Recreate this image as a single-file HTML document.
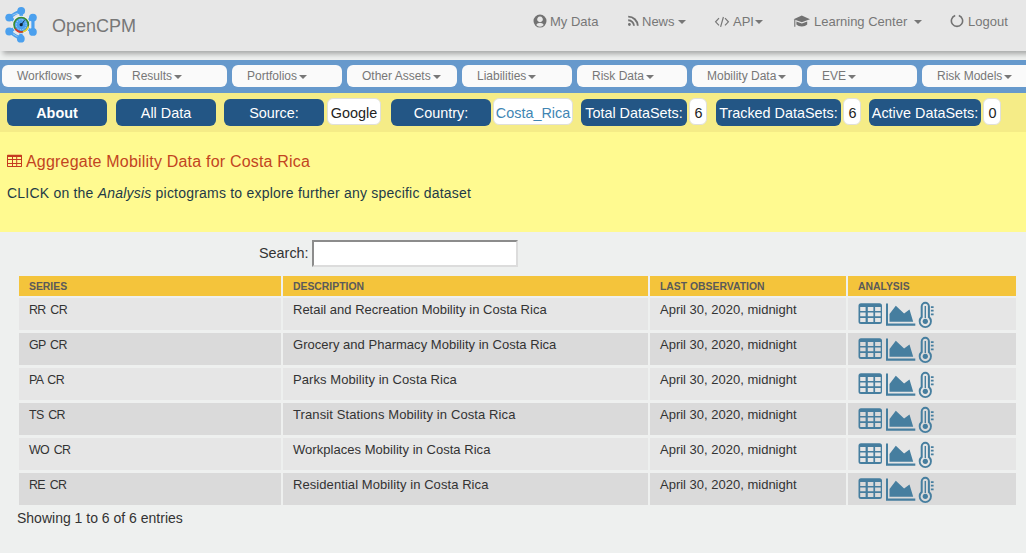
<!DOCTYPE html>
<html><head><meta charset="utf-8">
<style>
*{box-sizing:border-box;margin:0;padding:0}
html,body{width:1026px;height:558px;overflow:hidden;background:#fff;font-family:"Liberation Sans",sans-serif}
.abs{position:absolute}
#hdr{position:absolute;left:0;top:0;width:1060px;height:51px;background:#e7e7e7;box-shadow:3px 3px 5px rgba(0,0,0,.3)}
#brand{position:absolute;left:52px;top:16px;font-size:18px;color:#777}
.rn{position:absolute;top:14px;font-size:13px;color:#777;white-space:nowrap}
.caret{display:inline-block;width:0;height:0;border-left:4px solid transparent;border-right:4px solid transparent;border-top:4px solid #777;vertical-align:middle;margin-left:3px}
#nav{position:absolute;left:0;top:60px;width:1026px;height:33px;background:#6699cc}
.nb{position:absolute;top:5px;height:22px;width:110px;background:#fafafa;border-radius:6px;font-size:12px;color:#777;padding:4px 0 0 15px;white-space:nowrap}
.rn .caret{position:relative;top:-1px}
.nb .caret{border-top-color:#777;margin-left:2px}
#ybar{position:absolute;left:0;top:93px;width:1026px;height:39px;background:#f5ec87}
.db{position:absolute;top:6px;height:27px;padding-top:1px;background:#235685;border-radius:6px;color:#fff;font-size:14.4px;text-align:center;line-height:27px}
.wb{position:absolute;top:5px;height:27px;background:#fff;border:1px solid #e0e0da;border-radius:6px;color:#222;font-size:14.4px;text-align:center;line-height:26px;padding-top:1px}
#content{position:absolute;left:0;top:132px;width:1026px;height:100px;background:#fffa90}
#title{position:absolute;left:26px;top:21px;font-size:16px;letter-spacing:0.2px;color:#c2441f}
#sub{position:absolute;left:7px;top:53px;font-size:14px;letter-spacing:0.21px;color:#1e3a47}
#search{position:absolute;left:259px;top:245px;font-size:14.4px;color:#333}
#sbox{position:absolute;left:312px;top:240px;width:206px;height:27px;background:#fff;border:2px solid #8c8c8c;border-right-color:#dcdcdc;border-bottom-color:#dcdcdc}
table{position:absolute;left:18px;top:277px;border-collapse:separate;border-spacing:2px;margin:-2px}

.th{position:absolute;top:276px;height:20px;background:#f4c43b;color:#5a5a5a;font-size:10.4px;font-weight:bold;padding:5px 0 0 10px;white-space:nowrap}
.td{position:absolute;height:32px;color:#333;font-size:13px;padding:4px 0 0 10px;white-space:nowrap}
.ser{font-size:12.4px;letter-spacing:-0.6px;word-spacing:1.8px}
.odd{background:#e6e6e6}.even{background:#dadada}
.ic{position:absolute;left:0;top:0}
#tbg{position:absolute;left:19px;top:276px;width:997px;height:229px;background:#eef0ef}
#info{position:absolute;left:17px;top:510px;font-size:14px;color:#333}
</style></head><body>
<div style="position:absolute;left:0;top:0;width:1026px;height:553px;background:#eef0ef"></div>
<div id="hdr">
  <svg class="abs" style="left:0;top:0" width="45" height="48" viewBox="0 0 45 48">
    <g stroke="#4ba0ee" stroke-width="3.3" fill="none" stroke-linecap="round">
      <path d="M21.2 10.8L21.2 24.7M9.2 17.6L21.2 24.7M32.9 17.6L21.2 24.7M9.2 31.5L21.2 24.7M32.9 31.9L21.2 24.7M20.8 38.7L21.2 24.7M32.9 17.6L32.9 31.9M21.2 10.8Q15 13 9.2 17.6M9.2 31.5Q15 36 20.8 38.7"/>
    </g>
    <g stroke="#eaf2fa" stroke-width="0.7" fill="none" opacity="0.7">
      <path d="M12 15.5Q16 13.5 19 12.8M30.8 20.5L30.8 29M12.5 33.5Q16 36 18.5 37M5.8 16L7 14.6M5.8 30L7 28.6M18 8.6L19.2 7.4M30 16L31.2 14.6"/>
    </g>
    <g fill="#4ba0ee">
      <circle cx="21.2" cy="10.8" r="3.9"/><circle cx="9.2" cy="17.6" r="3.9"/><circle cx="32.9" cy="17.6" r="3.9"/>
      <circle cx="9.2" cy="31.5" r="3.9"/><circle cx="32.9" cy="31.9" r="3.9"/><circle cx="20.8" cy="38.7" r="3.9"/>
    </g>
    <circle cx="21.2" cy="24.7" r="9" fill="#eef3f8"/>
    <circle cx="21.2" cy="24.7" r="7.2" fill="#4ba0ee" stroke="#3b8a2e" stroke-width="1.6"/>
    <path d="M15.2 28.7A7.2 7.2 0 0 0 23 31.7" fill="none" stroke="#d9352a" stroke-width="1.6"/>
    <path d="M23 31.7A7.2 7.2 0 0 0 28.2 26.5" fill="none" stroke="#e8d23a" stroke-width="1.6"/>
    <circle cx="21.2" cy="24.7" r="5" fill="none" stroke="#d8e8f6" stroke-width="0.7" stroke-dasharray="1.3 1.3"/>
    <path d="M21.2 24.7L24.6 20.4" stroke="#0c2338" stroke-width="0.9"/>
    <circle cx="21.2" cy="24.7" r="1.6" fill="#0c2338"/>
  </svg>
  <div id="brand">OpenCPM</div>
  <svg class="abs" style="left:533px;top:14px" width="14" height="14" viewBox="0 0 14 14"><path fill="#727272" fill-rule="evenodd" d="M7 0.6a6.5 6.5 0 1 1 0 13a6.5 6.5 0 1 1 0-13z M7 2.6a2.8 2.8 0 1 0 0.01 0z M3.3 11a5 5 0 0 0 7.4 0c-0.5-1.2-1.5-1.9-2.7-2h-2c-1.2 0.1-2.2 0.8-2.7 2z"/></svg>
  <div class="rn" style="left:550px">My Data</div>
  <svg class="abs" style="left:627px;top:15px" width="12" height="12" viewBox="0 0 12 12"><g fill="none" stroke="#727272" stroke-width="1.9"><path d="M1.2 5.2a5.8 5.8 0 0 1 5.8 5.6"/><path d="M1.2 1.6a9.6 9.6 0 0 1 9.6 9.2"/></g><circle cx="2.4" cy="9.5" r="1.4" fill="#727272"/></svg>
  <div class="rn" style="left:642px">News<span class="caret"></span></div>
  <svg class="abs" style="left:714px;top:16px" width="16" height="12" viewBox="0 0 16 12"><g fill="none" stroke="#777" stroke-width="1.2"><path d="M5 2.2L1.6 5.8L5 9.4"/><path d="M11 2.2L14.4 5.8L11 9.4"/><path d="M9.4 1L6.6 10.8"/></g></svg>
  <div class="rn" style="left:733px">API<span class="caret" style="margin-left:1px"></span></div>
  <svg class="abs" style="left:793px;top:15px" width="18" height="13" viewBox="0 0 18 13"><path fill="#727272" d="M8.8 0.6L17 4.2L8.8 7.2L0.6 4.2z"/><path fill="#727272" d="M3.4 6.4v3.2c1.2 1.4 3.3 1.8 5.4 1.8s4.2-0.4 5.4-1.8v-3.2l-5.4 2z"/><path fill="none" stroke="#727272" stroke-width="1.1" d="M1.8 4.6v7.2"/></svg>
  <div class="rn" style="left:814px">Learning Center <span class="caret"></span></div>
  <svg class="abs" style="left:950px;top:14px" width="14" height="14" viewBox="0 0 14 14"><path fill="none" stroke="#727272" stroke-width="1.6" d="M5.2 1.5a5.6 5.6 0 1 0 3.6 0"/></svg>
  <div class="rn" style="left:968px">Logout</div>
</div>
<div id="nav">
  <div class="nb" style="left:2px">Workflows<span class="caret"></span></div>
  <div class="nb" style="left:117px">Results<span class="caret"></span></div>
  <div class="nb" style="left:232px">Portfolios<span class="caret"></span></div>
  <div class="nb" style="left:347px">Other Assets<span class="caret"></span></div>
  <div class="nb" style="left:462px">Liabilities<span class="caret"></span></div>
  <div class="nb" style="left:577px">Risk Data<span class="caret"></span></div>
  <div class="nb" style="left:692px">Mobility Data<span class="caret"></span></div>
  <div class="nb" style="left:807px">EVE<span class="caret"></span></div>
  <div class="nb" style="left:922px">Risk Models<span class="caret"></span></div>
</div>
<div id="ybar">
  <div class="db" style="left:7px;width:100px;font-weight:bold">About</div>
  <div class="db" style="left:116px;width:100px">All Data</div>
  <div class="db" style="left:224px;width:100px">Source:</div>
  <div class="wb" style="left:327px;width:54px">Google</div>
  <div class="db" style="left:391px;width:100px">Country:</div>
  <div class="wb" style="left:493px;width:80px;color:#4085b3">Costa_Rica</div>
  <div class="db" style="left:581px;width:106px">Total DataSets:</div>
  <div class="wb" style="left:689px;width:18px;padding-left:1px">6</div>
  <div class="db" style="left:716px;width:125px">Tracked DataSets:</div>
  <div class="wb" style="left:843px;width:18px;padding-left:1px">6</div>
  <div class="db" style="left:869px;width:112px">Active DataSets:</div>
  <div class="wb" style="left:983px;width:18px;padding-left:1px">0</div>
</div>
<div id="content">
  <svg class="abs" style="left:0;top:0" width="30" height="40" viewBox="0 132 30 40"><path fill="#c53a1f" fill-rule="evenodd" d="M7.8 154.8h13.4a0.8 0.8 0 0 1 0.8 0.8v10.6a0.8 0.8 0 0 1-0.8 0.8h-13.4a0.8 0.8 0 0 1-0.8-0.8v-10.6a0.8 0.8 0 0 1 0.8-0.8z M8 157v2.00h4.00v-2.00z M13 157v2.00h3.20v-2.00z M17.2 157v2.00h3.80v-2.00z M8 160v3.00h4.00v-3.00z M13 160v3.00h3.20v-3.00z M17.2 160v3.00h3.80v-3.00z M8 164v2.00h4.00v-2.00z M13 164v2.00h3.20v-2.00z M17.2 164v2.00h3.80v-2.00z"/></svg>
  <div id="title">Aggregate Mobility Data for Costa Rica</div>
  <div id="sub">CLICK on the <i>Analysis</i> pictograms to explore further any specific dataset</div>
</div>
<div id="search">Search:</div>
<div id="sbox"></div>
<svg width="0" height="0" style="position:absolute"><defs>
<g id="icons" fill="#467e9f">
<path fill-rule="evenodd" d="M13 5.3h18.5a2.5 2.5 0 0 1 2.5 2.5v15.7a2.5 2.5 0 0 1-2.5 2.5h-18.5a2.5 2.5 0 0 1-2.5-2.5v-15.7a2.5 2.5 0 0 1 2.5-2.5z M12.2 8.9v4.2h5.4v-4.2z M19.8 8.9v4.2h5.6v-4.2z M27.1 8.9v4.2h5.6v-4.2z M12.2 14.5v3.7h5.4v-3.7z M19.8 14.5v3.7h5.6v-3.7z M27.1 14.5v3.7h5.6v-3.7z M12.2 19.9v4.2h5.4v-4.2z M19.8 19.9v4.2h5.6v-4.2z M27.1 19.9v4.2h5.6v-4.2z"/>
<path d="M38 5.6h2v20h27.3v2.1h-29.3z"/>
<path d="M41.5 23.8v-7.8l6.3-8.3l8.3 7.8l5.4-4.1l3.7 12.4z"/>
<path fill-rule="evenodd" d="M77.3 3.8a4.6 4.6 0 0 1 4.6 4.6v10.2a6.6 6.6 0 1 1 -9.2 0v-10.2a4.6 4.6 0 0 1 4.6-4.6z M77.3 5.8a2.6 2.6 0 0 0 -2.6 2.6v11.2a4.7 4.7 0 1 0 5.2 0v-11.2a2.6 2.6 0 0 0 -2.6-2.6z"/>
<path d="M76.6 8h1.4v12h-1.4z"/>
<circle cx="77.3" cy="23.3" r="2.6"/>
<path d="M82.9 8.2h2.7v1.8h-2.7z M82.9 11.7h2.7v1.8h-2.7z M82.9 15.4h2.7v1.8h-2.7z"/>
</g></defs></svg>
<div id="tbg"></div>
<div class="th" style="left:19px;width:262px">SERIES</div>
<div class="th" style="left:283px;width:365px">DESCRIPTION</div>
<div class="th" style="left:650px;width:196px">LAST OBSERVATION</div>
<div class="th" style="left:848px;width:168px">ANALYSIS</div>
<div class="td odd" style="left:19px;top:298px;width:262px"><span class="ser">RR CR</span></div>
<div class="td odd" style="left:283px;top:298px;width:365px">Retail and Recreation Mobility in Costa Rica</div>
<div class="td odd" style="left:650px;top:298px;width:196px">April 30, 2020, midnight</div>
<div class="td odd" style="left:848px;top:298px;width:168px"><svg class="ic" width="90" height="32" viewBox="0 0 90 32"><use href="#icons"/></svg></div>
<div class="td even" style="left:19px;top:333px;width:262px"><span class="ser">GP CR</span></div>
<div class="td even" style="left:283px;top:333px;width:365px;letter-spacing:0.025px">Grocery and Pharmacy Mobility in Costa Rica</div>
<div class="td even" style="left:650px;top:333px;width:196px">April 30, 2020, midnight</div>
<div class="td even" style="left:848px;top:333px;width:168px"><svg class="ic" width="90" height="32" viewBox="0 0 90 32"><use href="#icons"/></svg></div>
<div class="td odd" style="left:19px;top:368px;width:262px"><span class="ser">PA CR</span></div>
<div class="td odd" style="left:283px;top:368px;width:365px;letter-spacing:0.075px">Parks Mobility in Costa Rica</div>
<div class="td odd" style="left:650px;top:368px;width:196px">April 30, 2020, midnight</div>
<div class="td odd" style="left:848px;top:368px;width:168px"><svg class="ic" width="90" height="32" viewBox="0 0 90 32"><use href="#icons"/></svg></div>
<div class="td even" style="left:19px;top:403px;width:262px"><span class="ser">TS CR</span></div>
<div class="td even" style="left:283px;top:403px;width:365px;letter-spacing:0.105px">Transit Stations Mobility in Costa Rica</div>
<div class="td even" style="left:650px;top:403px;width:196px">April 30, 2020, midnight</div>
<div class="td even" style="left:848px;top:403px;width:168px"><svg class="ic" width="90" height="32" viewBox="0 0 90 32"><use href="#icons"/></svg></div>
<div class="td odd" style="left:19px;top:438px;width:262px"><span class="ser">WO CR</span></div>
<div class="td odd" style="left:283px;top:438px;width:365px;letter-spacing:0.035px">Workplaces Mobility in Costa Rica</div>
<div class="td odd" style="left:650px;top:438px;width:196px">April 30, 2020, midnight</div>
<div class="td odd" style="left:848px;top:438px;width:168px"><svg class="ic" width="90" height="32" viewBox="0 0 90 32"><use href="#icons"/></svg></div>
<div class="td even" style="left:19px;top:473px;width:262px"><span class="ser">RE CR</span></div>
<div class="td even" style="left:283px;top:473px;width:365px;letter-spacing:0.075px">Residential Mobility in Costa Rica</div>
<div class="td even" style="left:650px;top:473px;width:196px">April 30, 2020, midnight</div>
<div class="td even" style="left:848px;top:473px;width:168px"><svg class="ic" width="90" height="32" viewBox="0 0 90 32"><use href="#icons"/></svg></div>
<div id="info">Showing 1 to 6 of 6 entries</div>
</body></html>
